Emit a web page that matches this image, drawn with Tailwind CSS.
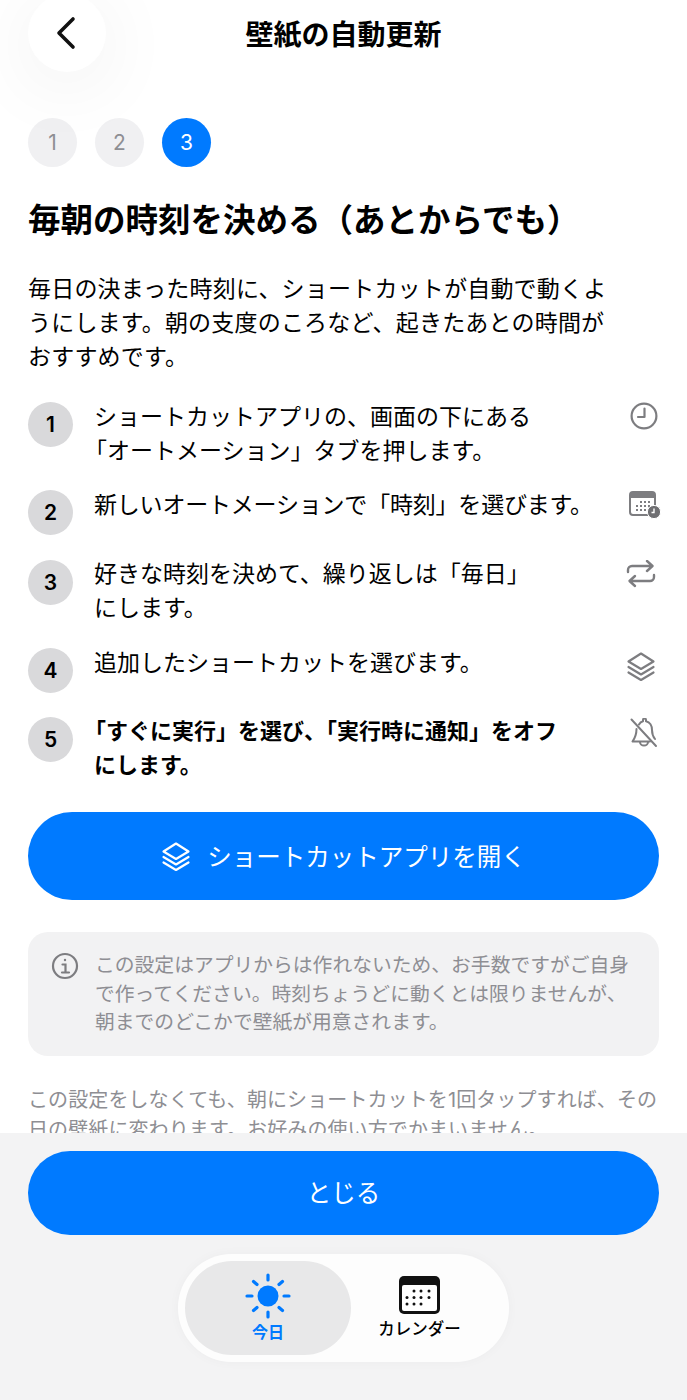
<!DOCTYPE html>
<html lang="ja">
<head>
    <meta charset="UTF-8">
    <meta name="viewport" content="width=device-width, initial-scale=1.0">
    <title>壁紙の自動更新</title>
    <script src="https://cdn.jsdelivr.net/npm/@tailwindcss/browser@4"></script>
</head>
<body class="bg-white font-['Inter','Noto_Sans_CJK_JP',sans-serif] text-black">
    <div class="flex h-[1400px] w-[687px] flex-col overflow-hidden">
        <!-- Scrolling content -->
        <div class="h-[1133px] shrink-0 overflow-hidden px-[28px]">
            <!-- Header -->
            <div class="relative -mt-[6px] flex h-[78px] items-center">
                <button class="flex h-[78px] w-[78px] items-center justify-center rounded-full bg-white shadow-[0_12px_80px_rgba(0,0,0,0.07)]">
                    <svg class="h-[36px] w-[36px]" viewBox="0 0 36 36" fill="none" stroke="#111" stroke-width="3.6" stroke-linecap="round" stroke-linejoin="round"><path d="M24 4 L10 18 L24 32"/></svg>
                </button>
                <h1 class="flex-1 pt-[4px] pr-[78px] text-center text-[28px] font-semibold">壁紙の自動更新</h1>
            </div>

            <!-- Step dots -->
            <div class="mt-[46px] flex gap-[18px]">
                <div class="flex h-[49px] w-[49px] items-center justify-center rounded-full bg-[#f0f0f2] pt-[1px] text-[21px] text-[#8e8e93]">1</div>
                <div class="flex h-[49px] w-[49px] items-center justify-center rounded-full bg-[#f0f0f2] pt-[1px] text-[21px] text-[#8e8e93]">2</div>
                <div class="flex h-[49px] w-[49px] items-center justify-center rounded-full bg-[#007aff] pt-[1px] text-[21px] text-white">3</div>
            </div>

            <h2 class="mt-[30px] text-[32.5px] leading-[48px] font-bold whitespace-nowrap">毎朝の時刻を決める（あとからでも）</h2>

            <p class="mt-[27px] text-[23px] leading-[34px] tracking-[0.2px] whitespace-nowrap">毎日の決まった時刻に、ショートカットが自動で動くよ<br>うにします。朝の支度のころなど、起きたあとの時間が<br>おすすめです。</p>

            <!-- Steps -->
            <div class="mt-[13px] flex flex-col">
                <div class="flex h-[103px] items-start pt-[15px]">
                    <div class="flex h-[45px] w-[45px] shrink-0 items-center justify-center rounded-full bg-[#d9d9db] text-[21px] font-semibold">1</div>
                    <p class="ml-[21px] -mt-[2px] flex-1 text-[23px] leading-[34px] whitespace-nowrap">ショートカットアプリの、画面の下にある<br><span class="-ml-[10px]">「オートメーション」タブを押します。</span></p>
                    <svg class="mr-[1px] h-[28px] w-[28px] shrink-0" viewBox="0 0 28 28" fill="none" stroke="#7d7d80" stroke-width="2.2" stroke-linecap="round" stroke-linejoin="round"><circle cx="14" cy="14" r="12.4"/><path d="M14.5 6.5 V15 H8"/></svg>
                </div>
                <div class="flex h-[70px] items-start">
                    <div class="flex h-[45px] w-[45px] shrink-0 items-center justify-center rounded-full bg-[#d9d9db] text-[21px] font-semibold">2</div>
                    <p class="ml-[21px] -mt-[2px] flex-1 text-[23px] leading-[34px] tracking-[-0.2px] whitespace-nowrap">新しいオートメーションで「時刻」を選びます。</p>
                    <svg class="mt-[1px] -mr-[2px] h-[28px] w-[32px] shrink-0" viewBox="0 0 32 28" fill="none"><rect x="1" y="1" width="25" height="23" rx="3" fill="#fff" stroke="#7d7d80" stroke-width="2"/><path d="M1 4 a3 3 0 0 1 3-3 h19 a3 3 0 0 1 3 3 v3 H1z" fill="#7d7d80"/><g fill="#7d7d80"><rect x="11" y="10" width="2" height="2"/><rect x="15" y="10" width="2" height="2"/><rect x="19" y="10" width="2" height="2"/><rect x="7" y="14" width="2" height="2"/><rect x="11" y="14" width="2" height="2"/><rect x="15" y="14" width="2" height="2"/><rect x="19" y="14" width="2" height="2"/><rect x="7" y="18" width="2" height="2"/><rect x="11" y="18" width="2" height="2"/><rect x="15" y="18" width="2" height="2"/></g><circle cx="25" cy="21" r="6.6" fill="#6f6f72" stroke="#fff" stroke-width="1"/><path d="M25 17.5 V21.5 H22.5" stroke="#fff" stroke-width="1.4" fill="none"/></svg>
                </div>
                <div class="flex h-[88px] items-start">
                    <div class="flex h-[45px] w-[45px] shrink-0 items-center justify-center rounded-full bg-[#d9d9db] text-[21px] font-semibold">3</div>
                    <p class="ml-[21px] -mt-[3px] flex-1 text-[23px] leading-[34px] whitespace-nowrap">好きな時刻を決めて、繰り返しは「毎日」<br>にします。</p>
                    <svg class="mr-[3px] h-[28px] w-[30px] shrink-0" viewBox="0 0 30 28" fill="none" stroke="#7d7d80" stroke-width="2.4" stroke-linecap="round" stroke-linejoin="round"><path d="M2 12 V10 a4 4 0 0 1 4-4 H26 M21 1 L26.5 6 L21 11"/><path d="M28 15 V17 a4 4 0 0 1-4 4 H4 M9 16 L3.5 21 L9 26"/></svg>
                </div>
                <div class="flex h-[69px] items-start">
                    <div class="flex h-[45px] w-[45px] shrink-0 items-center justify-center rounded-full bg-[#d9d9db] text-[21px] font-semibold">4</div>
                    <p class="ml-[21px] -mt-[2px] flex-1 text-[23px] leading-[34px] whitespace-nowrap">追加したショートカットを選びます。</p>
                    <svg class="mt-[4px] mr-[3px] h-[30px] w-[30px] shrink-0" viewBox="0 0 30 30" fill="none" stroke="#7d7d80" stroke-width="2.2" stroke-linecap="round" stroke-linejoin="round"><path d="M15 1.5 L27.5 9.5 L15 17 L2.5 9.5z"/><path d="M2.5 15 L15 22.5 L27.5 15"/><path d="M2.5 20.5 L15 28 L27.5 20.5"/></svg>
                </div>
                <div class="flex items-start">
                    <div class="flex h-[45px] w-[45px] shrink-0 items-center justify-center rounded-full bg-[#d9d9db] text-[21px] font-semibold">5</div>
                    <p class="ml-[21px] -mt-[3px] flex-1 text-[22px] leading-[34px] font-bold whitespace-nowrap"><span class="-ml-[10px]">「すぐに実行」を選び、「実行時に通知」をオフ</span><br>にします。</p>
                    <svg class="mt-[1px] mr-[1px] h-[30px] w-[28px] shrink-0" viewBox="0 0 28 30" fill="none" stroke="#7d7d80" stroke-width="2" stroke-linecap="round" stroke-linejoin="round"><path d="M9 6.5 C10 4.5 11.5 3.5 13 3.2 V2 a1.5 1.5 0 0 1 3 0 V3.2 C20 4 22 8 22 12 C22 16 23 18.5 25 21"/><path d="M6.5 11 C6.5 17 5 20 2.5 23.5 H20"/><path d="M10 24 a4 3.6 0 0 0 8 0"/><path d="M1.5 1.5 L26 28"/></svg>
                </div>
            </div>

            <!-- Open shortcuts -->
            <button class="mt-[30px] flex h-[88px] w-full items-center justify-center gap-[16px] rounded-full bg-[#007aff] pt-[2px] text-[24.5px] text-white">
                <svg class="h-[30px] w-[30px]" viewBox="0 0 30 30" fill="none" stroke="#fff" stroke-width="2.2" stroke-linecap="round" stroke-linejoin="round"><path d="M15 1.5 L27.5 9.5 L15 17 L2.5 9.5z"/><path d="M2.5 15 L15 22.5 L27.5 15"/><path d="M2.5 20.5 L15 28 L27.5 20.5"/></svg>
                <span>ショートカットアプリを開く</span>
            </button>

            <!-- Notice -->
            <div class="mt-[32px] flex h-[124px] rounded-[20px] bg-[#f2f2f3] pt-[19px] pl-[23px]">
                <svg class="mt-[1px] h-[28px] w-[28px] shrink-0" viewBox="0 0 28 28" fill="none" stroke="#7d7d80" stroke-width="2.2" stroke-linecap="round"><circle cx="14" cy="14" r="12"/><path d="M11.5 12.5 H14.5 V20 M11 20.5 H18"/><circle cx="14" cy="8" r="1.2" fill="#7d7d80" stroke="none"/></svg>
                <p class="ml-[16px] text-[19.8px] leading-[28.5px] text-[#8e8e93] whitespace-nowrap">この設定はアプリからは作れないため、お手数ですがご自身<br>で作ってください。時刻ちょうどに動くとは限りませんが、<br>朝までのどこかで壁紙が用意されます。</p>
            </div>

            <p class="mt-[29px] text-[20px] leading-[30px] tracking-[0.1px] text-[#8e8e93] whitespace-nowrap">この設定をしなくても、朝にショートカットを1回タップすれば、その<br>日の壁紙に変わります。お好みの使い方でかまいません。</p>
        </div>

        <!-- Bottom bar -->
        <div class="flex flex-1 flex-col items-center bg-[#f3f3f4] px-[28px] pt-[18px]">
            <button class="h-[84px] w-full rounded-full bg-[#007aff] pt-[1px] text-[24.5px] text-white">とじる</button>
            <div class="mt-[19px] flex h-[108px] w-[331px] items-center rounded-full bg-white/85 pl-[7px] shadow-[0_0_12px_rgba(0,0,0,0.03)]">
                <div class="flex h-[94px] w-[166px] flex-col items-center rounded-full bg-[#e8e8e9] pt-[12px]">
                    <svg class="h-[46px] w-[46px]" viewBox="0 0 46 46" fill="none" stroke="#007aff" stroke-width="3.2" stroke-linecap="round"><circle cx="23" cy="23" r="10.5" fill="#007aff" stroke="none"/><path d="M23 2 V7 M23 39 V44 M2 23 H7 M39 23 H44 M8.5 8.5 L12 11.5 M37.5 8.5 L34 11.5 M8.5 37.5 L12 34.5 M37.5 37.5 L34 34.5"/></svg>
                    <span class="mt-[1px] text-[16px] leading-[24px] font-semibold text-[#007aff]">今日</span>
                </div>
                <div class="flex h-[94px] w-[137px] flex-col items-center pt-[15px]">
                    <svg class="h-[38px] w-[41px]" viewBox="0 0 41 38"><rect width="41" height="38" rx="5" fill="#111"/><rect x="3" y="9" width="35" height="26" rx="2" fill="#fff"/><g fill="#111"><circle cx="15" cy="15" r="1.5"/><circle cx="22" cy="15" r="1.5"/><circle cx="30" cy="15" r="1.5"/><circle cx="8" cy="21.5" r="1.5"/><circle cx="15" cy="21.5" r="1.5"/><circle cx="22" cy="21.5" r="1.5"/><circle cx="30" cy="21.5" r="1.5"/><circle cx="8" cy="28" r="1.5"/><circle cx="15" cy="28" r="1.5"/><circle cx="22" cy="28" r="1.5"/></g></svg>
                    <span class="mt-[3px] text-[16.5px] leading-[24px] font-medium whitespace-nowrap">カレンダー</span>
                </div>
            </div>
        </div>
    </div>
</body>
</html>
